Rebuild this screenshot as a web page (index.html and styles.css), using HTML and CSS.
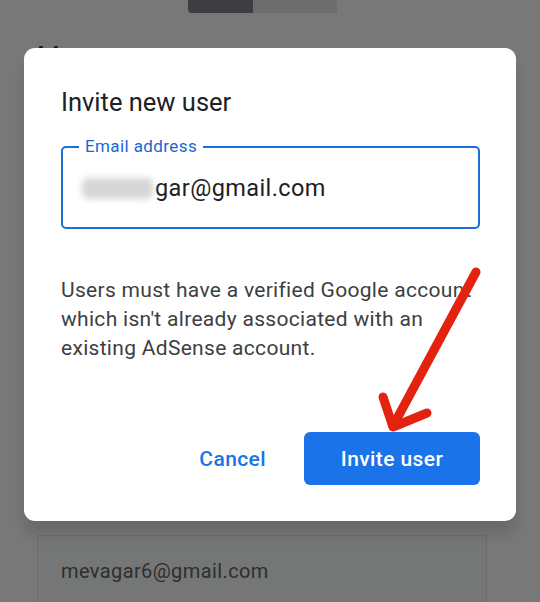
FILE: index.html
```html
<!DOCTYPE html>
<html>
<head>
  <meta charset="UTF-8">
  <meta name="viewport" content="width=device-width, initial-scale=1.0">
  <title>Invite new user</title>
  <link rel="stylesheet" href="styles.css">
</head>
<body>
  <div class="page">
    <div class="tabs">
      <span class="tab tab-dark"></span>
      <span class="tab tab-light"></span>
    </div>
    <h2 class="page-title">Manage users</h2>
    <div class="spacer"></div>
    <div class="user-card">
      <p class="user-email">mevagar6@gmail.com</p>
    </div>
  </div>

  <div class="dialog">
    <h1 class="dialog-title">Invite new user</h1>

    <div class="field">
      <label class="field-label">Email address</label>
      <div class="field-value"><span class="blur"></span>gar@gmail.com</div>
    </div>

    <p class="note">Users must have a verified Google account which isn't already associated with an existing AdSense account.</p>

    <div class="actions">
      <button class="btn btn-text">Cancel</button>
      <button class="btn btn-primary">Invite user</button>
    </div>
  </div>

  <svg class="arrow" width="540" height="602" viewBox="0 0 540 602">
    <line x1="476" y1="272" x2="393" y2="426" />
    <polyline points="383,397 393,427 427,413" />
  </svg>
</body>
</html>
```

FILE: styles.css
```css
* {
  padding: 0;
  margin: 0;
  box-sizing: border-box;
}
body {
  width: 540px;
  height: 602px;
  overflow: hidden;
  font-family: Roboto, "Noto Sans", sans-serif;
  background: #787878;
}
.page {
  display: flex;
  flex-direction: column;
  height: 602px;
}
.tabs {
  display: flex;
  padding-left: 188px;
  height: 13px;
}
.tab {
  display: block;
  height: 13px;
}
.tab-dark {
  width: 65px;
  background: #3d3e41;
  border-radius: 0 0 0 4px;
}
.tab-light {
  width: 84px;
  background: #6c6d6f;
}
.page-title {
  margin: 28px 0 0 37px;
  font-size: 26px;
  font-weight: 400;
  color: #1a1a1a;
  white-space: nowrap;
}
.spacer {
  flex: 1;
}
.user-card {
  margin: 0 53px 0 37px;
  height: 67px;
  border: 1px solid #6c6c6c;
  border-bottom: 0;
  background: #757676;
  padding: 23px 0 0 23px;
}
.user-email {
  font-size: 20px;
  color: #2e2e2e;
  letter-spacing: 0.4px;
}

.dialog {
  position: absolute;
  left: 24px;
  top: 48px;
  width: 492px;
  height: 473px;
  background: #fff;
  border-radius: 11px;
  padding: 38px 36px 0 37px;
  box-shadow: 0 14px 14px rgba(0, 0, 0, 0.12);
}
.dialog-title {
  font-size: 25.5px;
  font-weight: 400;
  color: #202124;
  line-height: 32px;
}
.field {
  position: relative;
  margin-top: 28px;
  height: 83px;
  border: 2px solid #1a6fd9;
  border-radius: 5px;
  padding: 26px 0 0 19px;
}
.field-label {
  position: absolute;
  left: 16px;
  top: -11px;
  padding: 0 6px;
  background: #fff;
  font-size: 17px;
  line-height: 18px;
  color: #1967d2;
  letter-spacing: 0.4px;
}
.field-value {
  display: flex;
  align-items: center;
  font-size: 23.5px;
  line-height: 28px;
  color: #202124;
  letter-spacing: 0.4px;
}
.blur {
  display: inline-block;
  width: 71px;
  height: 21px;
  margin-right: 2px;
  background: #d6d6d6;
  border-radius: 6px;
  filter: blur(3px);
}
.note {
  margin-top: 47px;
  font-size: 21px;
  line-height: 29px;
  color: #3c4043;
  letter-spacing: 0.3px;
  padding-right: 2px;
}
.actions {
  display: flex;
  justify-content: flex-end;
  align-items: center;
  gap: 38px;
  margin-top: 69px;
}
.btn {
  font-family: Roboto, "Noto Sans", sans-serif;
  font-size: 21px;
  font-weight: 500;
  letter-spacing: 0.4px;
  border: 0;
  cursor: pointer;
}
.btn-text {
  background: none;
  color: #1a73e8;
}
.btn-primary {
  width: 176px;
  height: 53px;
  border-radius: 6px;
  background: #1a73e8;
  color: #fff;
}

.arrow {
  position: absolute;
  left: 0;
  top: 0;
  fill: none;
  stroke: #e3230f;
  stroke-width: 9;
  stroke-linecap: round;
  stroke-linejoin: round;
}
```
